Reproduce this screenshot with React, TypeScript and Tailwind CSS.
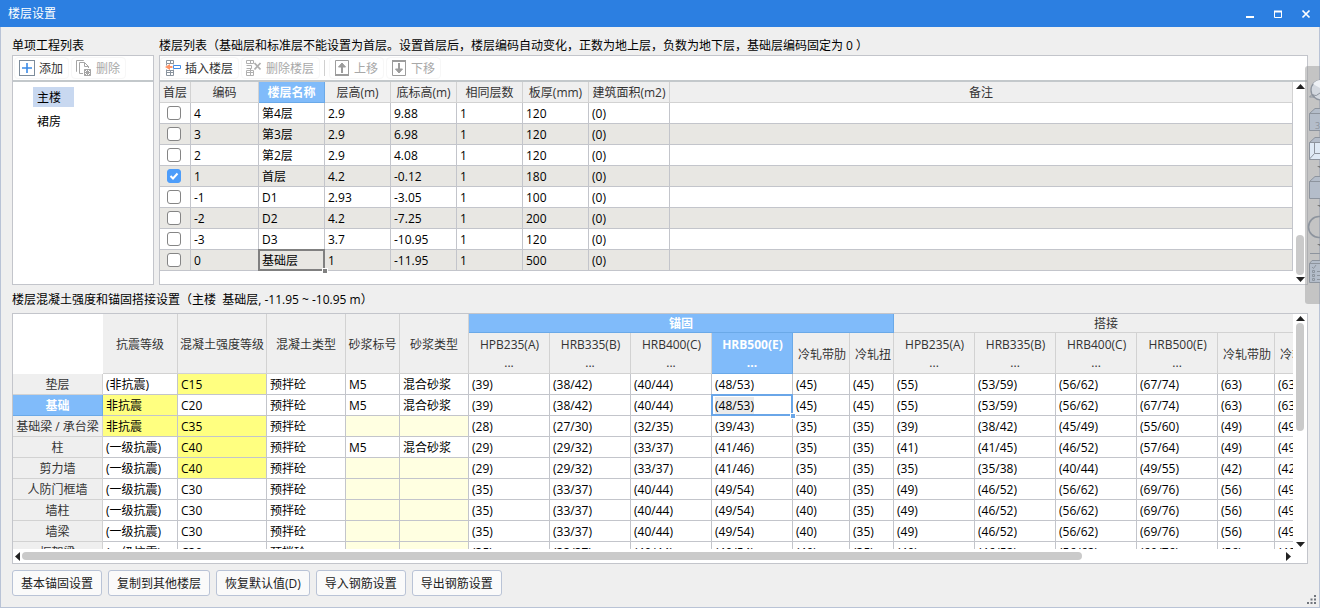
import { useState, type ReactNode } from "react";

type Floor = {
  code: string;
  name: string;
  height: string;
  bottom: string;
  same: string;
  slab: string;
  area: string;
};

const FLOORS: Floor[] = [
  { code: "4", name: "第4层", height: "2.9", bottom: "9.88", same: "1", slab: "120", area: "(0)" },
  { code: "3", name: "第3层", height: "2.9", bottom: "6.98", same: "1", slab: "120", area: "(0)" },
  { code: "2", name: "第2层", height: "2.9", bottom: "4.08", same: "1", slab: "120", area: "(0)" },
  { code: "1", name: "首层", height: "4.2", bottom: "-0.12", same: "1", slab: "180", area: "(0)" },
  { code: "-1", name: "D1", height: "2.93", bottom: "-3.05", same: "1", slab: "100", area: "(0)" },
  { code: "-2", name: "D2", height: "4.2", bottom: "-7.25", same: "1", slab: "200", area: "(0)" },
  { code: "-3", name: "D3", height: "3.7", bottom: "-10.95", same: "1", slab: "120", area: "(0)" },
  { code: "0", name: "基础层", height: "1", bottom: "-11.95", same: "1", slab: "500", area: "(0)" },
];

type Member = {
  name: string;
  grade: string;
  gradeSet?: boolean;
  concrete: string;
  concreteSet?: boolean;
  mortar?: boolean;
  values: string[];
};

const BASE = ["(39)", "(38/42)", "(40/44)", "(48/53)", "(45)", "(45)", "(55)", "(53/59)", "(56/62)", "(67/74)", "(63)", "(63)"];
const WALL = ["(35)", "(33/37)", "(40/44)", "(49/54)", "(40)", "(35)", "(49)", "(46/52)", "(56/62)", "(69/76)", "(56)", "(49)"];

const MEMBERS: Member[] = [
  { name: "垫层", grade: "(非抗震)", concrete: "C15", concreteSet: true, mortar: true, values: BASE },
  { name: "基础", grade: "非抗震", gradeSet: true, concrete: "C20", mortar: true, values: BASE },
  {
    name: "基础梁 / 承台梁",
    grade: "非抗震",
    gradeSet: true,
    concrete: "C35",
    concreteSet: true,
    values: ["(28)", "(27/30)", "(32/35)", "(39/43)", "(35)", "(35)", "(39)", "(38/42)", "(45/49)", "(55/60)", "(49)", "(49)"],
  },
  {
    name: "柱",
    grade: "(一级抗震)",
    concrete: "C40",
    concreteSet: true,
    mortar: true,
    values: ["(29)", "(29/32)", "(33/37)", "(41/46)", "(35)", "(35)", "(41)", "(41/45)", "(46/52)", "(57/64)", "(49)", "(49)"],
  },
  {
    name: "剪力墙",
    grade: "(一级抗震)",
    concrete: "C40",
    concreteSet: true,
    values: ["(29)", "(29/32)", "(33/37)", "(41/46)", "(35)", "(35)", "(35)", "(35/38)", "(40/44)", "(49/55)", "(42)", "(42)"],
  },
  { name: "人防门框墙", grade: "(一级抗震)", concrete: "C30", values: WALL },
  { name: "墙柱", grade: "(一级抗震)", concrete: "C30", values: WALL },
  { name: "墙梁", grade: "(一级抗震)", concrete: "C30", values: WALL },
  { name: "框架梁", grade: "(一级抗震)", concrete: "C30", values: WALL },
];

const STEELS = ["HPB235(A)", "HRB335(B)", "HRB400(C)", "HRB500(E)", "冷轧带肋", "冷轧扭"];

const HEAD = "border-r border-b border-[#d2d2d2] bg-[#efefef] px-0 pt-[2px] pb-0 font-normal text-[#333]";
const HEAD_ON = "border-r border-b border-[#6aa9e8] bg-[#80bbfa] px-0 pt-[2px] pb-0 font-bold text-white";
const CELL = "h-[21px] border-r border-b border-[#c3c5cb] pt-[2px] pr-0 pb-0 pl-[3px]";

function ToolButton({ icon, label, disabled }: { icon: ReactNode; label: string; disabled?: boolean }) {
  return (
    <button
      type="button"
      disabled={disabled}
      className="flex h-[22px] shrink-0 items-center gap-1 rounded border border-[#f7f7f7] pr-[5px] pl-1 text-[#333] disabled:text-[#a8a8a8]"
    >
      {icon}
      <span className="pt-[2px]">{label}</span>
    </button>
  );
}

function AddIcon() {
  return (
    <svg width="16" height="16" viewBox="0 0 16 16" fill="none">
      <rect x="0.5" y="0.5" width="15" height="15" stroke="#7d8c9b" />
      <path d="M8 3v10M3 8h10" stroke="#3a8ae6" strokeWidth="1.6" />
    </svg>
  );
}

function RemoveIcon() {
  return (
    <svg width="16" height="16" viewBox="0 0 16 16" fill="none" stroke="#a5a5a5">
      <path d="M1 11.500H.5V.5h7V1" />
      <path d="M7 13.500H3.500V2.500h5l4 4V8M8.500 2.500v4h4" />
      <path d="M8.500 9.500h6v6h-6zM8.500 9.500l6 6M14.500 9.500l-6 6M11.500 9v7M8 12.500h7" />
    </svg>
  );
}

function InsertFloorIcon() {
  return (
    <svg width="16" height="16" viewBox="0 0 16 16" fill="none">
      <path d="M1.500.5h7v3h-7zM5.500.5v3M1.500 3.500v2M8.500 3.500v1M1.500 9.500v6h7v-6M1.500 12.500h7M5.500 10v5.500M1.500 10.500h7" stroke="#8a949e" />
      <path d="M5 4 0 7l5 3V8h2.500V6H5z" fill="#ff9466" />
      <path d="M8.500 5.500h7v3h-7z" stroke="#3f8de8" />
    </svg>
  );
}

function DeleteFloorIcon() {
  return (
    <svg width="16" height="16" viewBox="0 0 16 16" fill="none" stroke="#b0b0b0">
      <path d="M.5.5h7v3h-7zM4.500.5v3M.5 5.500h5v3h-5M.5 10.500h7v5h-7zM4.500 8.500v7M.5 12.500h7" />
      <path d="m8.500 3 6 6.500M14.500 3l-6 6.500" strokeWidth="1.8" />
    </svg>
  );
}

function MoveIcon({ down }: { down?: boolean }) {
  return (
    <svg width="16" height="16" viewBox="0 0 16 16" fill="none" stroke="#9c9c9c" className={down ? "rotate-180" : ""}>
      <path d="M4.500 14.500h-3V.5h13v14h-3" />
      <path d="M8 13V5" strokeWidth="2" />
      <path d="M8 3 4.500 7h7z" fill="#9c9c9c" />
      <path d="M1 15h14" strokeWidth="2" />
    </svg>
  );
}

const ARROWS = {
  up: "M0 5 4.500 0 9 5z",
  down: "M0 0h9L4.500 5z",
  left: "M5 0v9L0 4.500z",
  right: "M0 0v9l5-4.500z",
};

function Arrow({ to }: { to: keyof typeof ARROWS }) {
  const flat = to === "up" || to === "down";
  return (
    <svg width={flat ? 9 : 5} height={flat ? 5 : 9} className="shrink-0" fill="#222">
      <path d={ARROWS[to]} />
    </svg>
  );
}

function VScroll({ thumb }: { thumb: string }) {
  return (
    <div className="flex w-[14px] shrink-0 flex-col items-center bg-white py-[2px]">
      <Arrow to="up" />
      <div className="flex min-h-0 w-2 flex-1 flex-col py-[2px]">
        <div className={`rounded-full bg-[#cacaca] ${thumb}`} />
      </div>
      <Arrow to="down" />
    </div>
  );
}

function FloorTable() {
  const [first, setFirst] = useState("1");
  return (
    <table className="w-full table-fixed border-separate border-spacing-0">
      <colgroup>
        <col className="w-[31px]" />
        <col className="w-[68px]" />
        <col className="w-[66px]" />
        <col className="w-[66px]" />
        <col className="w-[66px]" />
        <col className="w-[66px]" />
        <col className="w-[66px]" />
        <col className="w-[81px]" />
        <col />
      </colgroup>
      <thead>
        <tr className="h-[21px] whitespace-nowrap">
          {["首层", "编码", "楼层名称", "层高(m)", "底标高(m)", "相同层数", "板厚(mm)", "建筑面积(m2)", "备注"].map((h) => (
            <th key={h} scope="col" className={h === "楼层名称" ? HEAD_ON : HEAD}>
              {h}
            </th>
          ))}
        </tr>
      </thead>
      <tbody>
        {FLOORS.map((f) => (
          <tr key={f.code} className="even:bg-[#e8e7e3]">
            <td className="h-[21px] border-r border-b border-[#c3c5cb] py-0 pr-0 pl-[7px]">
              <label className="relative block size-[14px]">
                <input
                  type="checkbox"
                  aria-label={`首层 ${f.name}`}
                  checked={first === f.code}
                  onChange={() => setFirst(f.code)}
                  className="peer block size-[14px] appearance-none rounded-[3px] border border-[#858585] bg-white checked:border-[#4d9dfa] checked:bg-[#4d9dfa]"
                />
                <svg viewBox="0 0 14 14" className="pointer-events-none absolute inset-0 hidden peer-checked:block" fill="none" stroke="#fff" strokeWidth="2">
                  <path d="m3.500 7 2.500 2.500 4.500-5" />
                </svg>
              </label>
            </td>
            <td className={CELL}>{f.code}</td>
            <td className={`${CELL} relative`}>
              {f.name}
              {f.code === "0" && (
                <>
                  <span className="absolute -inset-px border-2 border-[#808080]" />
                  <span className="absolute -right-[4px] -bottom-[4px] z-10 size-[6px] border border-white bg-[#808080]" />
                </>
              )}
            </td>
            <td className={CELL}>{f.height}</td>
            <td className={CELL}>{f.bottom}</td>
            <td className={CELL}>{f.same}</td>
            <td className={CELL}>{f.slab}</td>
            <td className={CELL}>{f.area}</td>
            <td className={CELL} />
          </tr>
        ))}
      </tbody>
    </table>
  );
}

function SteelHead({ name, active }: { name: string; active?: boolean }) {
  const cold = name.startsWith("冷");
  return (
    <th scope="col" className={`${active ? HEAD_ON : HEAD} h-[41px]`}>
      {cold ? (
        <div className="overflow-hidden pt-[2px] pl-[5px] text-left">{name}</div>
      ) : (
        <>
          <div className="pl-px">{name}</div>
          <div>...</div>
        </>
      )}
    </th>
  );
}

function AnchorTable() {
  return (
    <table className="w-[1305px] table-fixed border-separate border-spacing-0 whitespace-nowrap">
      <colgroup>
        <col className="w-[90px]" />
        <col className="w-[75px]" />
        <col className="w-[89px]" />
        <col className="w-[79px]" />
        <col className="w-[54px]" />
        <col className="w-[69px]" />
        <col span={4} className="w-[81px]" />
        <col className="w-[57px]" />
        <col className="w-[44px]" />
        <col span={4} className="w-[81px]" />
        <col className="w-[57px]" />
        <col className="w-[44px]" />
      </colgroup>
      <thead>
        <tr className="h-[19px] leading-[16px]">
          <td rowSpan={2} className="bg-white p-0" />
          {["抗震等级", "混凝土强度等级", "混凝土类型", "砂浆标号", "砂浆类型"].map((h) => (
            <th key={h} rowSpan={2} scope="col" className={HEAD}>
              {h}
            </th>
          ))}
          <th colSpan={6} scope="colgroup" className={HEAD_ON}>
            锚固
          </th>
          <th colSpan={6} scope="colgroup" className={HEAD}>
            搭接
          </th>
        </tr>
        <tr>
          {STEELS.map((s) => (
            <SteelHead key={s} name={s} active={s === "HRB500(E)"} />
          ))}
          {STEELS.map((s) => (
            <SteelHead key={s} name={s} />
          ))}
        </tr>
      </thead>
      <tbody>
        {MEMBERS.map((m) => {
          const current = m.name === "基础";
          const mortarCls = m.mortar ? CELL : `${CELL} bg-[#ffffe1]`;
          return (
            <tr key={m.name}>
              <th scope="row" className={current ? HEAD_ON : HEAD}>
                {m.name}
              </th>
              <td className={m.gradeSet ? `${CELL} bg-[#ffff80]` : CELL}>{m.grade}</td>
              <td className={m.concreteSet ? `${CELL} bg-[#ffff80]` : CELL}>{m.concrete}</td>
              <td className={CELL}>预拌砼</td>
              <td className={mortarCls}>{m.mortar && "M5"}</td>
              <td className={mortarCls}>{m.mortar && "混合砂浆"}</td>
              {m.values.map((v, i) =>
                current && i === 3 ? (
                  <td key={i} className={`${CELL} relative`}>
                    <span className="bg-[#ebebeb]">{v}</span>
                    <span className="absolute -inset-px border-2 border-[#6aa6e8]" />
                    <span className="absolute -right-[4px] -bottom-[4px] z-10 size-[6px] border border-white bg-[#6aa6e8]" />
                  </td>
                ) : (
                  <td key={i} className={CELL}>
                    {v}
                  </td>
                ),
              )}
            </tr>
          );
        })}
      </tbody>
    </table>
  );
}

// view toolbar of the main window, showing through at the right edge
function ViewDock() {
  return (
    <svg width="15" height="238" viewBox="0 0 15 238" className="absolute top-[66px] -right-px" fill="none" stroke="#8d949e">
      <path d="M15 0H3Q0 0 0 3v232q0 3 3 3h12z" fill="#999" fillOpacity="0.5" stroke="none" />
      <circle cx="16" cy="24" r="10" fill="#d3d8df" strokeWidth="1.300" />
      <path d="M8 18q3-4 7-4v8z" fill="#eef1f5" stroke="none" />
      <path d="M8 29q3 2 7-2M4.500 31l3-3 2 3z" />
      <path d="M4.500 47.500 10 42.500h6v22H4.500zM4.500 47.500H16" fill="#b4bdca" />
      <text x="10" y="63" fontSize="9" fill="#8d949e" stroke="none">
        3
      </text>
      <path d="M4.500 76.500 10 71.500h6v22H4.500z" fill="#b4bdca" />
      <path d="M4.500 76.500H16v17H4.500z" fill="#dfeaf6" />
      <path d="M9.500 77v10.500H16M4.500 93l5-5.500" />
      <path d="M4.500 115.500 10 110.500h6v22H4.500zM4.500 115.500H16" fill="#b4bdca" />
      <path d="M12 100h3v2zM12 139h3v2zM12 178h3v2z" fill="#777" stroke="none" />
      <circle cx="14" cy="161" r="10.500" strokeWidth="1.600" />
      <path d="M5 187.500h10" />
      <path d="M4.500 197.500 7 194.500h9v22H4.500zM4.500 197.500H16" fill="#b4bdca" />
      <path d="m7 201 1.500 1.500L11 199M7.500 204.500h2v2h-2zM7.500 208.500h2v2h-2zM7.500 212.500h2v2h-2zM12 205.500h3M12 209.500h3M12 213.500h3" />
    </svg>
  );
}

export default function App() {
  const [project, setProject] = useState("主楼");
  return (
    <div className="relative flex h-screen flex-col border border-t-0 border-[#b9c3d6] bg-[#efefef] font-['Open_Sans','Noto_Sans_CJK_SC',sans-serif] text-[12px] leading-[18px] text-black">
      <header className="-mx-px flex h-[27px] shrink-0 items-center justify-between bg-[#2c7fe1] pr-[9px] pl-2 text-white">
        <h1 className="pt-px">楼层设置</h1>
        <div className="flex gap-[18px]">
          <button type="button" aria-label="最小化">
            <svg width="10" height="10" stroke="#fff" strokeWidth="2">
              <path d="M1 8h8" />
            </svg>
          </button>
          <button type="button" aria-label="最大化">
            <svg width="10" height="10" fill="none" stroke="#fff">
              <path d="M1.500 2v6.500h7V2" />
              <path d="M1 2.500h8" strokeWidth="2" />
            </svg>
          </button>
          <button type="button" aria-label="关闭">
            <svg width="10" height="10" stroke="#fff" strokeWidth="1.700">
              <path d="m1.500 1.500 7 7M8.500 1.500l-7 7" />
            </svg>
          </button>
        </div>
      </header>

      <main className="flex min-h-0 flex-1 flex-col px-[11px] pb-[11px]">
        <div className="flex gap-[5px]">
          <section className="flex w-[142px] shrink-0 flex-col">
            <h2 className="pt-[10px]">单项工程列表</h2>
            <div className="flex-1 border border-[#c3c5cb] bg-white">
              <div className="flex h-[26px] items-center gap-[2px] border-b-2 border-[#c3c8cb] pl-px">
                <ToolButton icon={<AddIcon />} label="添加" />
                <ToolButton icon={<RemoveIcon />} label="删除" disabled />
              </div>
              <ul className="pt-[3px] pl-5">
                {["主楼", "裙房"].map((p) => (
                  <li key={p} className="py-[2px]">
                    <button
                      type="button"
                      onClick={() => setProject(p)}
                      className={`block h-5 w-[41px] pt-[2px] pl-1 text-left ${p === project ? "bg-[#c8d8f0]" : ""}`}
                    >
                      {p}
                    </button>
                  </li>
                ))}
              </ul>
            </div>
          </section>

          <section className="min-w-0 flex-1">
            <h2 className="truncate pt-[10px]">
              楼层列表（基础层和标准层不能设置为首层。设置首层后，楼层编码自动变化，正数为地上层，负数为地下层，基础层编码固定为 0 ）
            </h2>
            <div className="border border-[#c3c5cb] bg-white">
              <div className="flex h-[26px] items-center gap-[2px] border-b-2 border-[#c3c8cb]">
                <ToolButton icon={<InsertFloorIcon />} label="插入楼层" />
                <ToolButton icon={<DeleteFloorIcon />} label="删除楼层" disabled />
                <span className="mx-[2px] h-4 w-px bg-[#d0d0d0]" />
                <ToolButton icon={<MoveIcon />} label="上移" disabled />
                <ToolButton icon={<MoveIcon down />} label="下移" disabled />
              </div>
              <div className="flex">
                <div className="min-w-0 flex-1 pb-[13px]">
                  <FloorTable />
                </div>
                <VScroll thumb="mt-auto h-[40px]" />
              </div>
            </div>
          </section>
        </div>

        <h2 className="pt-[6px] pb-1 whitespace-pre">楼层混凝土强度和锚固搭接设置（主楼  基础层, -11.95 ~ -10.95 m）</h2>
        <section className="flex min-h-0 flex-1 flex-col border border-[#c3c5cb] bg-white">
          <div className="flex min-h-0 flex-1">
            <div className="min-w-0 flex-1 overflow-hidden">
              <AnchorTable />
            </div>
            <VScroll thumb="h-[108px]" />
          </div>
          <div className="flex h-[14px] shrink-0 items-center pr-4 pl-[2px]">
            <Arrow to="left" />
            <div className="h-2 min-w-0 flex-1 px-[2px]">
              <div className="h-2 w-[84%] rounded-full bg-[#cacaca]" />
            </div>
            <Arrow to="right" />
          </div>
        </section>

        <div className="mt-[6px] flex gap-[6px]">
          {["基本锚固设置", "复制到其他楼层", "恢复默认值(D)", "导入钢筋设置", "导出钢筋设置"].map((b) => (
            <button key={b} type="button" className="h-[26px] rounded-[3px] border border-[#b9c3d6] bg-[#fafafa] px-2 pt-[2px] text-[#222]">
              {b}
            </button>
          ))}
        </div>
      </main>

      <ViewDock />
      <svg width="9" height="9" className="absolute right-[3px] bottom-[3px]" fill="#70757c">
        <path d="M7 0h2v2H7zM7 3.500h2v2H7zM7 7h2v2H7zM3.500 3.500h2v2h-2zM3.500 7h2v2h-2zM0 7h2v2H0z" />
      </svg>
    </div>
  );
}
